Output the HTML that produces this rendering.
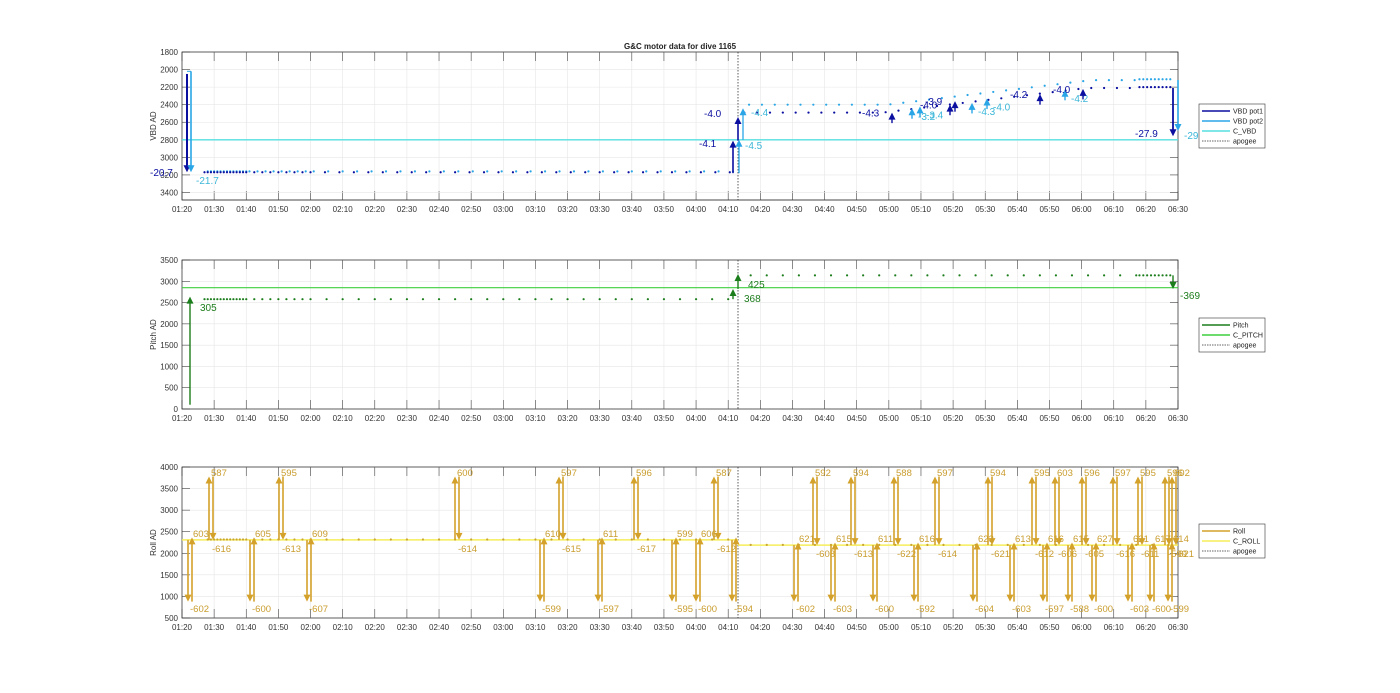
<!DOCTYPE html>
<html><head><meta charset="utf-8"><style>
html,body{margin:0;padding:0;background:#fff;}
svg{display:block;font-family:"Liberation Sans",Arial,sans-serif;}
</style></head><body>
<svg id="s" width="1400" height="693" viewBox="0 0 1400 693" xmlns="http://www.w3.org/2000/svg">
<rect width="1400" height="693" fill="#fff"/>
<text x="680" y="49" font-size="8" font-weight="bold" text-anchor="middle" fill="#222">G&amp;C motor data for dive 1165</text>
</svg>
<script>
const S=document.getElementById('s');const NS='http://www.w3.org/2000/svg';
function el(t,a,txt){const e=document.createElementNS(NS,t);for(const k in a)e.setAttribute(k,a[k]);if(txt!=null)e.textContent=txt;S.appendChild(e);return e;}
const X0=182,X1=1178;
const tx=m=>X0+(m-80)*(X1-X0)/310;
function axes(top,bot,yt,ymap,ylabel){
  el('rect',{x:X0,y:top,width:X1-X0,height:bot-top,fill:'#fff',stroke:'#262626','stroke-width':0.6});
  for(let i=0;i<=31;i++){const x=X0+i*(X1-X0)/31;
    el('line',{x1:x,y1:top,x2:x,y2:bot,stroke:'#e6e6e6','stroke-width':0.6});
    el('line',{x1:x,y1:bot,x2:x,y2:bot-9,stroke:'#444','stroke-width':0.6});
    el('line',{x1:x,y1:top,x2:x,y2:top+9,stroke:'#444','stroke-width':0.6});
    const m=80+i*10;const h=Math.floor(m/60),mm=m%60;
    el('text',{x:x,y:bot+12,'font-size':8,'text-anchor':'middle',fill:'#333'},String(h).padStart(2,'0')+':'+String(mm).padStart(2,'0'));}
  yt.forEach(v=>{const y=ymap(v);
    el('line',{x1:X0,y1:y,x2:X1,y2:y,stroke:'#e6e6e6','stroke-width':0.6});
    el('line',{x1:X0,y1:y,x2:X0+8,y2:y,stroke:'#444','stroke-width':0.6});
    el('line',{x1:X1,y1:y,x2:X1-8,y2:y,stroke:'#444','stroke-width':0.6});
    el('text',{x:X0-4,y:y+3,'font-size':8,'text-anchor':'end',fill:'#333'},v);});
  el('text',{x:0,y:0,'font-size':8,'text-anchor':'middle',fill:'#333',transform:`translate(156,${(top+bot)/2}) rotate(-90)`},ylabel);
  el('rect',{x:X0,y:top,width:X1-X0,height:bot-top,fill:'none',stroke:'#262626','stroke-width':0.6});
  el('line',{x1:738,y1:top,x2:738,y2:bot,stroke:'#333','stroke-width':0.8,'stroke-dasharray':'1.5,1.5'});
}
function arrow(x,y1,y2,c,w){w=w||1.6;const d=y2<y1?-1:1;
  el('line',{x1:x,y1:y1,x2:x,y2:y2-d*5,stroke:c,'stroke-width':w});
  el('polygon',{points:`${x-3.5},${y2-d*7} ${x+3.5},${y2-d*7} ${x},${y2}`,fill:c});}
function txt(x,y,s,c,sz){el('text',{x:x,y:y,'font-size':sz||10,fill:c},s);}
function dot(x,y,c){el('circle',{cx:x,cy:y,r:1.1,fill:c});}
function legend(x,y,items){const h=items.length*10+4;
  el('rect',{x:x,y:y,width:66,height:h,fill:'#fff',stroke:'#333','stroke-width':0.6});
  items.forEach((it,i)=>{const yy=y+7+i*10;
    el('line',{x1:x+3,y1:yy,x2:x+31,y2:yy,stroke:it[1],'stroke-width':it[2]?0.8:1.4,'stroke-dasharray':it[2]?'1.5,1':'none'});
    el('text',{x:x+34,y:yy+2.5,'font-size':7,fill:'#222'},it[0]);});}

// ---------- TOP ----------
const y1=v=>52+(v-1800)*0.0878;
axes(52,200,[1800,2000,2200,2400,2600,2800,3000,3200,3400],y1,'VBD AD');
const P1='#0b0fa0',P2='#2aa6e6',CV='#56dfe0';
el('line',{x1:X0,y1:y1(2800),x2:X1,y2:y1(2800),stroke:CV,'stroke-width':1.4});
for(let m=87;m<252;m+=(m<100?1:(m<120?2.5:4.5))){dot(tx(m),y1(3170),P1);dot(tx(m+1),y1(3160),P2);}
for(let m=255;m<378;m+=4){const v=m<298?2490:(m<360?2490-(m-298)*4.4:2210);dot(tx(m),y1(v),P1);dot(tx(m+1.5),y1(v-90),P2);}
for(let m=378;m<388;m+=1.2){dot(tx(m),y1(2200),P1);dot(tx(m),y1(2110),P2);}
arrow(187,y1(2050),y1(3170),P1,2);arrow(191,y1(2020),y1(3170),P2,1.6);
el('line',{x1:187,y1:y1(2020),x2:191,y2:y1(2020),stroke:P2,'stroke-width':1});
txt(150,176,'-20.7',P1);txt(196,184,'-21.7','#3bb6d8');
arrow(733,y1(3180),y1(2810),P1,1.6);arrow(738,y1(2810),y1(2540),P1,1.6);
arrow(739,y1(3180),y1(2800),P2,1.3);arrow(743,y1(2800),y1(2440),P2,1.3);
txt(699,147,'-4.1',P1);txt(704,117,'-4.0',P1);txt(745,149,'-4.5','#3bb6d8');txt(751,116,'-4.4','#3bb6d8');
[[892,2490,'-4.3',P1],[912,2440,'-3.2',P2],[920,2420,'-3.4',P2],[950,2400,'-4.0',P1],[955,2360,'-3.9',P1],[972,2380,'-4.3',P2],[987,2330,'-4.0',P2],[1040,2280,'-4.2',P1],[1065,2230,'-4.2',P2],[1083,2220,'-4.0',P1]].forEach(a=>{
  arrow(a[0],y1(+a[1]+120),y1(a[1]),a[3],1.4);txt(a[0]-30+ (a[3]==P2?36:0),y1(a[1])+ (a[3]==P2?8:0)+4,a[2],a[3]==P2?'#3bb6d8':P1);});
arrow(1173,y1(2210),y1(2760),P1,1.8);arrow(1178,y1(2120),y1(2700),P2,1.6);
txt(1135,137,'-27.9',P1);txt(1184,139,'-29','#3bb6d8');
legend(1199,104,[['VBD pot1',P1],['VBD pot2',P2],['C_VBD',CV],['apogee','#333',1]]);

// ---------- MIDDLE ----------
const y2=v=>409-v*149/3500;
axes(260,409,[0,500,1000,1500,2000,2500,3000,3500],y2,'Pitch AD');
const G='#1c7d1c',CP='#3fcf3f';
el('line',{x1:X0,y1:y2(2850),x2:X1,y2:y2(2850),stroke:CP,'stroke-width':1.1});
for(let m=87;m<251;m+=(m<100?1:(m<118?2.5:5))) dot(tx(m),y2(2580),G);
for(let m=257;m<378;m+=5) dot(tx(m),y2(3140),G);
for(let m=378;m<388;m+=1.2) dot(tx(m),y2(3140),G);
arrow(190,y2(100),y2(2640),G,1.4);txt(200,311,'305',G);
arrow(733,y2(2580),y2(2820),G,1.4);arrow(738,y2(2820),y2(3170),G,1.4);
txt(748,288,'425',G);txt(744,302,'368',G);
arrow(1173,y2(3140),y2(2820),G,1.4);txt(1180,299,'-369',G);
legend(1199,318,[['Pitch',G],['C_PITCH',CP],['apogee','#333',1]]);

// ---------- BOTTOM ----------
const y3=v=>618-(v-500)*151/3500;
axes(467,618,[500,1000,1500,2000,2500,3000,3500,4000],y3,'Roll AD');
const R='#d4a22a',CR='#f6ee5a',RT='#c99d2e';
el('line',{x1:X0,y1:y3(2310),x2:738,y2:y3(2310),stroke:CR,'stroke-width':1.5});
el('line',{x1:738,y1:y3(2190),x2:X1,y2:y3(2190),stroke:CR,'stroke-width':1.5});
for(let m=88;m<252;m+=(m<100?1:(m<118?2.5:5))) dot(tx(m),y3(2320),'#c9a530');
for(let m=257;m<388;m+=5) dot(tx(m),y3(2195),'#c9a530');
const tops=[[209,587,-616],[279,595,-613],[455,600,-614],[559,597,-615],[634,596,-617],[714,587,-612],[813,592,-608],[851,594,-613],[894,588,-622],[935,597,-614],[988,594,-621],[1032,595,-612],[1055,603,-606],[1082,596,-605],[1113,597,-616],[1138,595,-611],[1165,596,-599],[1172,602,-621]];
tops.forEach(t=>{const base=t[0]<738?2310:2190;arrow(t[0],y3(base),y3(3780),R,1.6);arrow(t[0]+4,y3(3780),y3(base),R,1.6);
  txt(t[0]+2,476,t[1],RT,9.5);txt(t[0]+3,y3(base)+12,t[2],RT,9.5);});
const bots=[[188,-602,603],[250,-600,605],[307,-607,609],[540,-599,610],[598,-597,611],[672,-595,599],[696,-600,606],[732,-594,null],[794,-602,621],[831,-603,615],[873,-600,611],[914,-592,616],[973,-604,623],[1010,-603,613],[1043,-597,616],[1068,-588,615],[1092,-600,627],[1128,-603,621],[1150,-600,617],[1168,-599,614]];
bots.forEach(b=>{const base=b[0]<738?2310:2190;arrow(b[0],y3(base),y3(880),R,1.6);arrow(b[0]+4,y3(880),y3(base+60),R,1.6);
  txt(b[0]+2,612,b[1],RT,9.5);if(b[2]!=null)txt(b[0]+5,y3(base)-3,b[2],RT,9.5);});
legend(1199,524,[['Roll',R],['C_ROLL',CR],['apogee','#333',1]]);
</script>
</body></html>
